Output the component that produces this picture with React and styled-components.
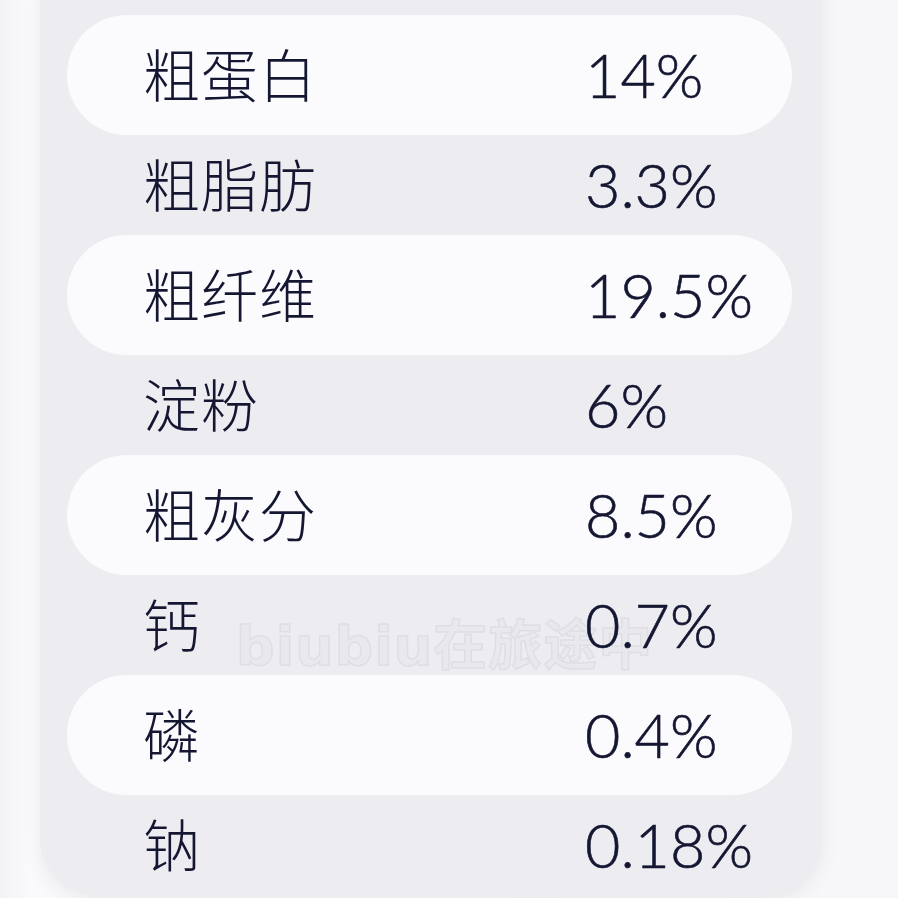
import React from 'react';
import styled, { createGlobalStyle } from 'styled-components';

const rows = [
  { name: '粗蛋白', value: '14%' },
  { name: '粗脂肪', value: '3.3%' },
  { name: '粗纤维', value: '19.5%' },
  { name: '淀粉', value: '6%' },
  { name: '粗灰分', value: '8.5%' },
  { name: '钙', value: '0.7%' },
  { name: '磷', value: '0.4%' },
  { name: '钠', value: '0.18%' },
];

const GlobalStyle = createGlobalStyle`
  html, body {
    margin: 0;
    padding: 0;
    background: #f7f7f9;
    overflow: hidden;
  }
  body {
    font-family: "Noto Sans CJK SC", "Noto Sans", sans-serif;
  }
`;

const Page = styled.div`
  width: 898px;
  height: 898px;
  overflow: hidden;
  padding-left: 40px;
  box-sizing: border-box;
  background: linear-gradient(to right, #f3f3f6 0px, #fafafc 30px, #f7f7f9 100%);
`;

const Panel = styled.div`
  position: relative;
  width: 782px;
  margin-top: -60px;
  padding: 75px 30px 0 27px;
  box-sizing: border-box;
  background: #ededf1;
  border-radius: 56px;
  box-shadow: 0 6px 18px rgba(120, 120, 140, 0.12);
  display: flex;
  flex-direction: column;
`;

const Row = styled.div`
  position: relative;
  z-index: 1;
  display: grid;
  grid-template-columns: 442px 1fr;
  align-items: center;
  padding: 0 0 5px 76px;
  box-sizing: border-box;
  height: ${(p) => (p.$pill ? 120 : 100)}px;
  background: ${(p) => (p.$pill ? '#fbfbfd' : 'transparent')};
  border-radius: 60px;
  color: #141632;
  line-height: 1;
`;

const Label = styled.span`
  font-size: 57px;
  font-weight: 300;
  letter-spacing: 1px;
`;

const Value = styled.span`
  font-family: Lato, "Noto Sans", sans-serif;
  font-size: 61px;
  font-weight: 300;
  padding-top: 4px;
  -webkit-text-stroke: 0.6px #141632;
`;

const Watermark = styled.div`
  position: absolute;
  z-index: 0;
  left: 196px;
  top: 662px;
  font-size: 54px;
  font-weight: 700;
  color: #e9e9ed;
  -webkit-text-stroke: 1.5px #dedee3;
  letter-spacing: 1px;
  pointer-events: none;
  font-family: "DejaVu Sans", "Noto Sans CJK SC", sans-serif;
`;

export default function App() {
  return (
    <Page>
      <GlobalStyle />
      <Panel>
        {rows.map((r, i) => (
          <Row key={r.name} $pill={i % 2 === 0}>
            <Label>{r.name}</Label>
            <Value>{r.value}</Value>
          </Row>
        ))}
        <Watermark>biubiu在旅途中</Watermark>
      </Panel>
    </Page>
  );
}
